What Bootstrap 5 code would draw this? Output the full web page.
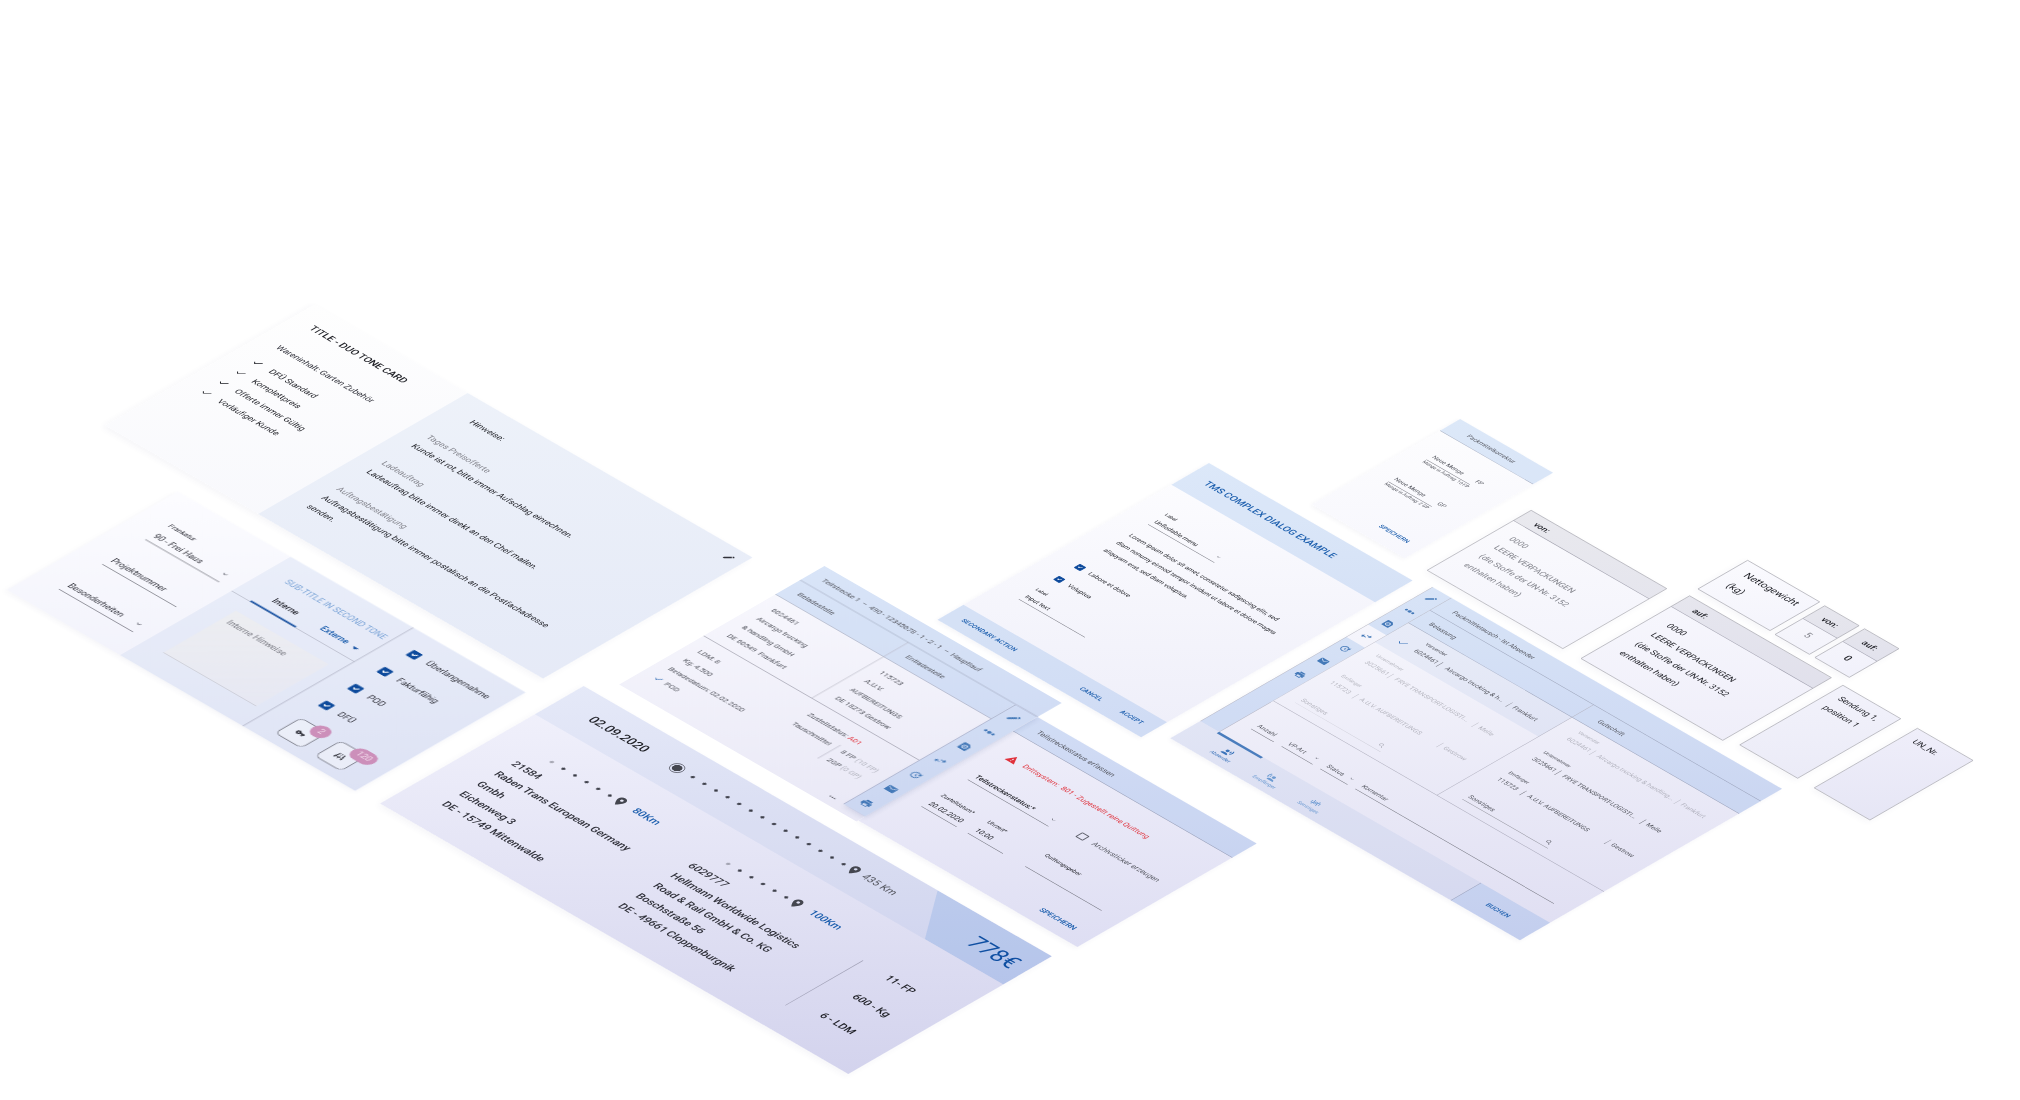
<!DOCTYPE html>
<html lang="de">
<head>
<meta charset="utf-8">
<meta name="viewport" content="width=device-width, initial-scale=1">
<title>TMS Komponenten</title>
<link href="https://cdn.jsdelivr.net/npm/bootstrap@5.3.0/dist/css/bootstrap.min.css" rel="stylesheet">
<style>
/* ---------- isometric board ---------- */
body{font-family:Roboto,"Open Sans","Liberation Sans",sans-serif;background:#fff;color:#30313a}
.board{position:relative;min-height:100vh;overflow:hidden}
.plane{position:absolute;left:0;top:0;transform-origin:0 0;transform:matrix(.86603,.5,-.86603,.5,0,0)}
.tile{position:absolute;left:calc(var(--u)*1px);top:calc(var(--v)*1px);width:calc(var(--w)*1px);height:calc(var(--h)*1px);
  transform-origin:0 0;transform:scale(var(--k));background:linear-gradient(135deg,var(--a),var(--b));
  font-size:14px;line-height:28px;white-space:nowrap;box-shadow:0 5px 10px rgba(60,60,110,.05)}
.duo{--u:486;--v:123;--w:820;--h:392;--k:.617;--a:#fefefe;--b:#f3f4fb}
.settings{--u:594;--v:389;--w:631;--h:309;--k:.637;--a:#fcfcff;--b:#eaebf8}
.route{--u:1023;--v:349;--w:807;--h:351;--k:.67;--a:#f2f2fc;--b:#d3d3ed}
.leg{--u:1042;--v:90;--w:512;--h:443;--k:.535;--a:#f9f9fe;--b:#e9e8f6}
.legstatus{--u:1316;--v:118;--w:473;--h:387;--k:.535;--a:#f0effa;--b:#dedef3}
.dialog{--u:1161;--v:-235;--w:510;--h:680;--k:.461;--a:#fdfdff;--b:#eeeef9}
.fix{--u:1262;--v:-424;--w:244;--h:389;--k:.44;--a:#fdfdfe;--b:#f7f7fd}
.swap{--u:1414;--v:-240;--w:859;--h:644;--k:.47;--a:#f8f8fd;--b:#dfdef2}
.un-from{--u:1394;--v:-374;--w:262;--h:201;--k:.6;--a:#fafafd;--b:#f4f4fc}
.un-to{--u:1571;--v:-380;--w:262;--h:201;--k:.627;--a:#f7f7fd;--b:#efeef9}
.net{--u:1569;--v:-449;--w:133;--h:92;--k:.63;--a:#fafafe;--b:#f4f4fc}
.net-from{--u:1659;--v:-448;--w:64;--h:92;--k:.63;--a:#f7f7fc;--b:#f3f3fb}
.net-to{--u:1705;--v:-448;--w:64;--h:92;--k:.63;--a:#f6f6fc;--b:#f1f1fb}
.pos{--u:1749;--v:-379;--w:107;--h:190;--k:.63;--a:#f2f2fb;--b:#ebebf7}
.unno{--u:1835;--v:-379;--w:103;--h:190;--k:.63;--a:#efeefa;--b:#e6e6f5}
.leg{z-index:2;box-shadow:none}
/* ---------- tones ---------- */
.tone{background:rgba(80,125,205,.08)}
.tone-blue,.act.tone-blue{background:rgba(60,130,220,.17)}
.tone-grey{background:rgba(20,20,40,.07)}
.soft{color:#54565f}.ghost{opacity:.38}.ink{color:#1d1e24}.muted-ink{color:#85868e}
.blue{color:#1d5fae}.blue-light{color:#7ea6d8}.red{color:#e0323c}
.med{font-weight:500}
.f11{font-size:11px;line-height:16px}.f14{font-size:14px}.f16{font-size:16px}.f19{font-size:19px}.f21{font-size:21px}.f34{font-size:34px}
.lh30{line-height:30px}.lh32{line-height:32px}
.rule-b{border-bottom:1px solid rgba(70,70,90,.45)}
.rule-t{border-top:1px solid rgba(70,70,90,.45)}
.rule-l{border-left:1px solid rgba(70,70,90,.4)}
.ico{width:16px;height:16px;fill:currentColor;flex:none}
.ico-lg{width:22px;height:22px}
.act{border:0;background:none;padding:0;color:#1d5fae;font-weight:500;line-height:28px}
/* ---------- form parts ---------- */
.fld{display:flex;flex-direction:column}
.fld label{font-size:11px;line-height:16px}
.fld input,.fld select{appearance:none;border:0;border-bottom:1px solid #5f606a;border-radius:0;background:none;padding:2px 0 0 2px;
  height:36px;width:100%;font-size:14px;color:inherit;outline:0}
.fld input::placeholder{color:inherit;opacity:1}
.fld select{background:url("data:image/svg+xml,%3Csvg xmlns='http://www.w3.org/2000/svg' viewBox='0 0 24 24'%3E%3Cpath fill='%23666873' d='M16.59 8.59L12 13.17 7.41 8.59 6 10l6 6 6-6z'/%3E%3C/svg%3E") no-repeat right 0 center/14px}
.w56{width:56px}.w67{width:67px}.w76{width:76px}.w114{width:114px}.w166{width:166px}.w174{width:174px}
.tick{display:flex;align-items:center;gap:16px}
.tick .form-check-input{width:16px;height:16px;margin:0;border-radius:2px;border:2px solid #5b5d68;background-color:transparent;flex:none}
.tick .form-check-input:checked{background-color:#0d4a9c;border-color:#0d4a9c;background-size:14px}
/* duo card */
.duo-left{width:287px;padding:28px 0 0 34px}
.duo-lead{margin:36px 0 16px}
.duo-right{flex:1;padding:28px 0 0 33px;position:relative}
.duo-notes{margin:37px 0 0}
.duo-edit{position:absolute;right:14px;top:14px;color:#30313a}
/* settings card */
.set-a{width:205px;padding:53px 0 0 46px}
.set-a .fld{width:134px}
.set-stack{display:flex;flex-direction:column;gap:42px}
.set-b{width:222px;padding-top:28px}
.set-b h2{margin:0;padding-left:34px;line-height:28px;font-weight:400}
.tabs{margin-top:15px;padding-left:33px;height:36px}
.tabs a{text-decoration:none;line-height:24px;height:36px}
.tabs a:first-child{padding:0 19px;border-bottom:3px solid #1651a3;color:#33343d}
.tabs a:last-child{padding-left:24px}
.tri{border:5px solid transparent;border-top-color:#1651a3;border-bottom:0;margin-left:10px}
.memo{display:block;margin:27px 0 0 35px;width:168px;height:132px;padding:9px 10px;border:0;border-bottom:1px solid rgba(70,70,90,.3);
  background:linear-gradient(135deg,rgba(238,238,238,.75),rgba(236,232,238,.4));resize:none;font-size:14px;line-height:28px;outline:0}
.memo::placeholder{color:#7b7c84}
.set-c{flex:1;padding:15px 0 0 35px}
.set-c .tick{height:53px}
.sq{position:relative;width:48px;height:48px;border:1px solid #4b4d58;border-radius:9px;background:rgba(255,255,255,.35);padding:0;color:#30313a}
.bubble{position:absolute;left:25px;top:-10px;min-width:28px;height:27px;line-height:27px;border-radius:14px;background:#cc8fba;color:#f3dcec;padding:0 8px;font-size:14px}
/* route card */
.route-head{height:84px;padding-left:54px;position:relative}
.route-date{width:139px}
.origin{width:20px;height:20px;border:1px solid #4b4d58;border-radius:50%;background:radial-gradient(circle,#44464f 6px,transparent 7px);margin-right:7px}
.dots{height:20px;width:120px;background:radial-gradient(circle,#3a3c46 2px,transparent 3px) 0 0/20px 20px}
.dots-long{width:280px}
.dots-fade{-webkit-mask-image:linear-gradient(90deg,rgba(0,0,0,.4) 20px,#000 20px)}
.pin{width:22px;height:22px;margin:0 -3px;fill:#44464f;flex:none}
.price{position:absolute;right:0;top:0;width:197px;height:84px;background:rgba(60,130,220,.17);clip-path:polygon(0 0,100% 0,100% 100%,62px 100%);
  padding-left:103px;line-height:88px;color:#0f4fa2}
.stop{width:304px;padding-top:46px}
.stop .track{padding-left:76px}
.stop address{margin:8px 0 0 54px}
.stop:nth-child(2){width:346px}
.loadline{height:134px;margin-top:85px}
.loads{margin:61px 0 0 44px;line-height:56px}
/* leg card */
.bar52{height:53px;line-height:54px;padding-left:24px}
.rail{width:47px;color:#4479b8}
.rail span{height:53px;display:flex;align-items:center;justify-content:center}
.rail-shadow{box-shadow:6px 4px 10px rgba(40,60,120,.12)}
.rail .rest{height:252px;align-items:flex-start;padding-top:20px}
.stopcell{height:154px;padding:15px 0 0 25px}
.status-left{width:234px;padding:17px 0 0 24px;line-height:32px}
.status-right{padding:17px 0 0 25px;line-height:32px;position:relative;flex:1}
.pallets{position:absolute;left:118px;top:56px;padding:0 0 0 12px;line-height:31px;height:50px;display:flex;flex-direction:column;justify-content:center}
.dots3{position:absolute;left:200px;top:147px}
.paren{color:#b3b4bf}
/* leg status */
.ls-body{padding:42px 36px 0 42px}
.ls-row{display:flex;align-items:flex-end}
.receiver{width:165px}
/* dialog */
.dlg-head{height:94px;line-height:92px;padding-left:38px}
.dlg-body{height:521px;padding:64px 0 0 57px}
.dlg-foot{height:65px;padding:0 29px 0 31px}
/* swap card */
.swap .rail{width:46px}
.swap-main{width:813px}
.swap-col{width:401px}
.party{height:86px;padding:18px 0 0 30px}
.party-first{height:82px;padding-top:15px}
.party-val{margin-top:10px}
.party-val>*{height:18px;line-height:16px}
.party-val>*+*{border-left:1px solid #5f606a}
.party-val>:first-child{width:60px}
.party-val>:nth-child(2){width:208px;padding-left:12px}
.party-val>:nth-child(3){padding-left:10px}
.col-b .party{padding-left:39px}
.col-b .party-val>:first-child{width:61px}
.party.sel{padding-left:66px;position:relative}
.party.sel .party-val>:nth-child(2){width:171px;padding-left:15px}
.sel-tick{position:absolute;left:24px;top:38px;color:#3b74ba}
.other{margin:22px 0 22px 30px;width:210px;position:relative}
.col-b .other{margin-left:39px}
.other .fld input{height:33px;border-color:#85868f}
.other svg{position:absolute;right:4px;top:10px}
.entry{height:129px;padding:51px 36px 0 32px;display:flex;gap:19px}
.swap-foot{height:74px}
.foot-tabs{padding-left:46px}
.foot-tab{width:108px;color:#6d9bd2;text-decoration:none;padding-top:22px}
.foot-tab.on{color:#3b74ba;padding-top:16px;border-top:6px solid #4a7dbd}
.flip{transform:scaleX(-1)}
.act.buchen{width:170px;padding-right:12px;border-left:1px solid rgba(70,70,90,.4)}
/* packaging tiles */
.lined{border:1px solid #a3a4ad}
.hd35{height:34px;line-height:36px;padding-left:26px}
.hd41{height:40px;line-height:42px}
.un-text{padding:17px 0 0 26px;line-height:29px}
.net-title{font-size:16px;padding:8px 0 0 20px}
</style>
</head>
<body>
<svg width="0" height="0" class="d-none" aria-hidden="true">
  <symbol id="i-edit" viewBox="0 0 24 24"><path d="M3 17.25V21h3.75L17.81 9.94l-3.75-3.75L3 17.25zM20.71 7.04a1 1 0 000-1.41l-2.34-2.34a1 1 0 00-1.41 0l-1.83 1.83 3.75 3.75 1.83-1.83z"/></symbol>
  <symbol id="i-check" viewBox="0 0 24 24"><path d="M9 16.17L4.83 12l-1.42 1.41L9 19 21 7l-1.41-1.41z"/></symbol>
  <symbol id="i-nodes" viewBox="0 0 24 24"><circle cx="3.500" cy="12" r="3"/><circle cx="12" cy="12" r="4"/><circle cx="20.500" cy="12" r="3"/></symbol>
  <symbol id="i-cam" viewBox="0 0 24 24"><path fill-rule="evenodd" d="M5 2h10l6 6v12a2 2 0 01-2 2H5a2 2 0 01-2-2V4a2 2 0 012-2zm7 5a5.500 5.500 0 100 11 5.500 5.500 0 000-11zm0 2a3.500 3.500 0 110 7 3.500 3.500 0 010-7zm0 2a1.500 1.500 0 100 3 1.500 1.500 0 000-3z"/></symbol>
  <symbol id="i-swap" viewBox="0 0 24 24"><path d="M6.990 10L2 15l4.990 5v-4H13v-2H6.990v-4zM22 9l-4.990-5v4H11v2h6.010v4L22 9z"/></symbol>
  <symbol id="i-clock" viewBox="0 0 24 24"><path d="M21 10.120h-6.780l2.740-2.820c-2.730-2.700-7.150-2.800-9.880-.1-2.730 2.710-2.730 7.080 0 9.790s7.150 2.710 9.880 0C18.320 15.650 19 14.080 19 12.100h2c0 1.980-.88 4.550-2.640 6.290-3.510 3.480-9.210 3.480-12.720 0-3.500-3.470-3.530-9.110-.02-12.580s9.140-3.470 12.650 0L21 3v7.120zM12.500 8v4.250l3.500 2.080-.72 1.210L11 13V8h1.500z"/></symbol>
  <symbol id="i-mail" viewBox="0 0 24 24"><path d="M20 4H4c-1.100 0-2 .9-2 2v12c0 1.100.9 2 2 2h16c1.100 0 2-.9 2-2V6c0-1.100-.9-2-2-2zm0 4l-8 5-8-5V6l8 5 8-5v2z"/></symbol>
  <symbol id="i-print" viewBox="0 0 24 24"><path d="M19 8H5c-1.660 0-3 1.340-3 3v6h4v4h12v-4h4v-6c0-1.660-1.340-3-3-3zm-3 11H8v-5h8v5zm3-7c-.55 0-1-.45-1-1s.45-1 1-1 1 .45 1 1-.45 1-1 1zm-1-9H6v4h12V3z"/></symbol>
  <symbol id="i-pin" viewBox="0 0 24 24"><path fill-rule="evenodd" d="M12 2C8.130 2 5 5.130 5 9c0 5.250 7 13 7 13s7-7.750 7-13c0-3.870-3.130-7-7-7zm0 9.500a2.500 2.500 0 010-5 2.500 2.500 0 010 5z"/></symbol>
  <symbol id="i-warn" viewBox="0 0 24 24"><path d="M1 21h22L12 2 1 21zm12-3h-2v-2h2v2zm0-4h-2v-4h2v4z"/></symbol>
  <symbol id="i-key" viewBox="0 0 24 24"><path d="M12.650 10C11.830 7.670 9.610 6 7 6c-3.310 0-6 2.690-6 6s2.690 6 6 6c2.610 0 4.830-1.670 5.650-4H17v4h4v-4h2v-4H12.650zM7 14c-1.100 0-2-.9-2-2s.9-2 2-2 2 .9 2 2-.9 2-2 2z"/></symbol>
  <symbol id="i-map" viewBox="0 0 24 24"><path d="M1 21L5 4h2.500L5 21zM23 21L19 4h-2.500L19 21zM11 4h2v4h-2zM11 10h2v4h-2zM11 16h2v5h-2zM4 15h16v2H4z"/></symbol>
  <symbol id="i-search" viewBox="0 0 24 24"><path d="M15.500 14h-.79l-.28-.27A6.471 6.471 0 0016 9.500 6.500 6.500 0 109.500 16c1.610 0 3.090-.59 4.230-1.570l.27.28v.79l5 4.990L20.490 19l-4.990-5zm-6 0a4.500 4.500 0 110-9 4.500 4.500 0 010 9z"/></symbol>
  <symbol id="i-voice" viewBox="0 0 24 24"><circle cx="9" cy="9" r="4"/><path d="M9 15c-2.670 0-8 1.340-8 4v2h16v-2c0-2.660-5.330-4-8-4zM16.760 5.360l-1.680 1.690c.84 1.180.84 2.710 0 3.890l1.680 1.690c2.020-2.020 2.020-5.070 0-7.270zM20.070 2l-1.630 1.630c2.770 3.020 2.770 7.560 0 10.740L20.070 16c3.900-3.890 3.910-9.950 0-14z"/></symbol>
  <symbol id="i-waves" viewBox="0 0 24 24"><path fill="none" stroke="currentColor" stroke-width="2" d="M9.500 8q3 4 0 8M5.500 5q5 7 0 14M14.500 8q-3 4 0 8M18.500 5q-5 7 0 14M2 9q2 3 0 6M22 9q-2 3 0 6"/></symbol>
</svg>

<main class="board">
<div class="plane">

  <section class="tile duo d-flex">
    <div class="duo-left">
      <h1 class="f16 med ink m-0 lh-base">TITLE - DUO TONE CARD</h1>
      <p class="duo-lead">Wareninhalt: Garten Zubehör</p>
      <ul class="list-unstyled m-0 lh32 ink">
        <li class="d-flex align-items-center gap-3"><svg class="ico"><use href="#i-check"/></svg>DFÜ Standard</li>
        <li class="d-flex align-items-center gap-3"><svg class="ico"><use href="#i-check"/></svg>Komplettpreis</li>
        <li class="d-flex align-items-center gap-3"><svg class="ico"><use href="#i-check"/></svg>Offerte immer Gültig</li>
        <li class="d-flex align-items-center gap-3"><svg class="ico"><use href="#i-check"/></svg>Vorläufiger Kunde</li>
      </ul>
    </div>
    <div class="duo-right tone">
      <p class="ms-3 mb-0 ink">Hinweise:</p>
      <p class="duo-notes ink"><span class="muted-ink">Tages Preisofferte</span><br>Kunde ist rot, bitte immer Aufschlag einrechnen.<br><br>
        <span class="muted-ink">Ladeauftrag</span><br>Ladeauftrag bitte immer direkt an den Chef mailen.<br><br>
        <span class="muted-ink">Auftragsbestätigung</span><br>Auftragsbestätigung bitte immer postalisch an die Postfachadresse<br>senden.</p>
      <svg class="ico duo-edit"><use href="#i-edit"/></svg>
    </div>
  </section>

  <section class="tile settings d-flex">
    <div class="set-a"><div class="set-stack">
      <div class="fld"><label for="frk">Frankatur</label><select id="frk"><option>90 - Frei Haus</option></select></div>
      <div class="fld"><input aria-label="Projektnummer" placeholder="Projektnummer"></div>
      <div class="fld"><select aria-label="Besonderheiten"><option>Besonderheiten</option></select></div>
    </div></div>
    <div class="set-b tone">
      <h2 class="blue-light f14">SUB-TITLE IN SECOND TONE</h2>
      <nav class="tabs d-flex rule-b"><a href="#" class="med">Interne</a><a href="#" class="med blue d-flex align-items-start">Externe<span class="tri align-self-center mb-2"></span></a></nav>
      <textarea class="memo" placeholder="Interne Hinweise" aria-label="Interne Hinweise"></textarea>
    </div>
    <div class="set-c tone rule-l">
      <label class="tick"><input class="form-check-input" type="checkbox" checked>Überlangernahme</label>
      <label class="tick"><input class="form-check-input" type="checkbox" checked>Fakturfähig</label>
      <label class="tick"><input class="form-check-input" type="checkbox" checked>POD</label>
      <label class="tick"><input class="form-check-input" type="checkbox" checked>DFÜ</label>
      <div class="d-flex gap-4 mt-3 ms-1">
        <button class="sq" type="button" aria-label="Schlüssel"><svg class="ico"><use href="#i-key"/></svg><span class="bubble">2</span></button>
        <button class="sq" type="button" aria-label="Strecke"><svg class="ico"><use href="#i-map"/></svg><span class="bubble">120</span></button>
      </div>
    </div>
  </section>

  <section class="tile route">
    <div class="route-head tone d-flex align-items-center">
      <div class="route-date f19 med ink">02.09.2020</div>
      <span class="origin"></span><span class="dots dots-long"></span>
      <svg class="pin"><use href="#i-pin"/></svg><span class="f16 soft ms-2">435 Km</span>
      <div class="price f34">778€</div>
    </div>
    <div class="d-flex">
      <div class="stop">
        <div class="track d-flex align-items-center lh-1"><span class="dots dots-fade"></span><svg class="pin"><use href="#i-pin"/></svg><span class="f16 blue med ms-3">80Km</span></div>
        <address class="f16 lh30 med">21584<br>Raben Trans European Germany<br>Gmbh<br>Eichenweg 3<br>DE - 15749 Mittenwalde</address>
      </div>
      <div class="stop">
        <div class="track d-flex align-items-center lh-1"><span class="dots dots-fade"></span><svg class="pin"><use href="#i-pin"/></svg><span class="f16 blue med ms-3">100Km</span></div>
        <address class="f16 lh30 med">6029777<br>Hellmann Worldwide Logistics<br>Road &amp; Rail GmbH &amp; Co. KG<br>Boschstraße 56<br>DE - 49661 Cloppenburgnik</address>
      </div>
      <div class="loadline rule-l"></div>
      <div class="loads f16 med ink">11- FP<br>600 - Kg<br>6 - LDM</div>
    </div>
  </section>

  <section class="tile legstatus">
    <div class="tone-blue rule-b bar52 ps-4 soft"><span class="ms-1">Teilstreckestatus erfassen</span></div>
    <div class="ls-body">
      <div class="d-flex align-items-center red gap-2 lh-sm"><svg class="ico ico-lg"><use href="#i-warn"/></svg><span class="ms-1">Drittsystem: &nbsp;801 - Zugestellt reine Quittung</span></div>
      <div class="ls-row ink mt-4 pt-3">
        <div class="fld w174"><select aria-label="Teilstreckenstatus" class="med"><option>Teilstreckenstatus:*</option></select></div>
        <label class="tick soft ms-5 mb-1 gap-3"><input class="form-check-input" type="checkbox">Archivsticker erzeugen</label>
      </div>
      <div class="ls-row ink mt-5 gap-4">
        <div class="fld w76"><label for="zd">Zustelldatum*</label><input id="zd" value="20.02.2020"></div>
        <div class="fld w76"><label for="uz">Uhrzeit*</label><input id="uz" value="10:00"></div>
        <div class="fld ms-4 receiver"><label for="qg">Quittungsgeber</label><input id="qg" class="pt-0"></div>
      </div>
      <div class="d-flex justify-content-end mt-5"><button type="button" class="act">SPEICHERN</button></div>
    </div>
  </section>

  <section class="tile leg soft">
    <div class="bar52 tone-blue rule-b">Teilstrecke 1 &nbsp;– &nbsp;490 - 12345678 - 1 - 2 - 1 &nbsp;– &nbsp;Hauptlauf</div>
    <div class="d-flex">
      <div class="flex-grow-1">
        <div class="d-flex">
          <div class="w-50"><div class="bar52 tone-blue rule-b">Beladestelle</div>
            <div class="stopcell lh32">6024461<br>Aircargo trucking<br>&amp; handling GmbH<br>DE 60549&nbsp; Frankfurt</div></div>
          <div class="w-50 rule-l"><div class="bar52 tone-blue rule-b">Entladestelle</div>
            <div class="stopcell lh32">115723<br>A.U.V.<br>AUFBEREITUNGS<br>DE 18273 Gestrow</div></div>
        </div>
        <div class="d-flex rule-t">
          <div class="status-left">LDM: 8<br>Kg: 4.500<br>Beladedatum: 02.02.2020<br><span class="d-flex align-items-center gap-2"><svg class="ico blue"><use href="#i-check"/></svg>POD</span></div>
          <div class="status-right">Zustellstatus: <span class="red">A01</span><br>Tauschmittel
            <div class="pallets rule-l"><span>8 FP <span class="paren">(10 FP)</span></span><span>2GP <span class="paren">(0 GP)</span></span></div>
            <span class="dots3">•••</span></div>
        </div>
      </div>
      <div class="rail rail-shadow tone-blue rule-l">
        <span><svg class="ico ico-lg"><use href="#i-edit"/></svg></span>
        <span><svg class="ico ico-lg"><use href="#i-nodes"/></svg></span>
        <span><svg class="ico ico-lg"><use href="#i-cam"/></svg></span>
        <span><svg class="ico ico-lg"><use href="#i-swap"/></svg></span>
        <span><svg class="ico ico-lg"><use href="#i-clock"/></svg></span>
        <span><svg class="ico ico-lg"><use href="#i-mail"/></svg></span>
        <span><svg class="ico ico-lg"><use href="#i-print"/></svg></span>
      </div>
    </div>
  </section>

  <section class="tile dialog ink">
    <div class="dlg-head tone-blue f21 med blue">TMS COMPLEX DIALOG EXAMPLE</div>
    <div class="dlg-body">
      <div class="fld w166"><label for="um">Label</label><select id="um"><option>Unflodable menu</option></select></div>
      <p class="mt-4 mb-0 pt-1 lh32">Lorem ipsum dolor sit amet, consetetur sadipscing elitr, sed<br>diam nonumy eirmod tempor invidunt ut labore et dolore magna<br>aliquyam erat, sed diam voluptua.</p>
      <label class="tick mt-4 pt-3 mb-4"><input class="form-check-input" type="checkbox" checked>Labore et dolore</label>
      <label class="tick"><input class="form-check-input" type="checkbox" checked>Voluptua</label>
      <div class="fld mt-4 w166"><label for="it" class="mt-1">Label</label><input id="it" value="Input text"></div>
    </div>
    <div class="dlg-foot tone-blue d-flex align-items-center">
      <button type="button" class="act me-auto">SECONDARY ACTION</button>
      <button type="button" class="act me-5">CANCEL</button><button type="button" class="act">ACCEPT</button>
    </div>
  </section>

  <section class="tile fix soft">
    <div class="bar52 tone-blue rule-b ps-5">Packmittelkorrektur</div>
    <div class="ps-5 pt-5">
      <div class="d-flex"><div class="fld w114"><input aria-label="Neue Menge FP" placeholder="Neue Menge"><span class="f11">Menge in Auftrag: 10 FP</span></div><span class="mt-1">FP</span></div>
      <div class="d-flex mt-5"><div class="fld w114"><input aria-label="Neue Menge GP" placeholder="Neue Menge"><span class="f11">Menge in Auftrag: 2 GP</span></div><span class="mt-1">GP</span></div>
    </div>
    <div class="d-flex justify-content-end pe-4 pt-5 mt-4"><button type="button" class="act mt-2 me-2">SPEICHERN</button></div>
  </section>

  <section class="tile swap soft">
    <div class="d-flex">
      <div class="rail rule-l">
        <span class="tone-blue"><svg class="ico ico-lg"><use href="#i-edit"/></svg></span>
        <span class="tone-blue"><svg class="ico ico-lg"><use href="#i-nodes"/></svg></span>
        <span class="tone-blue"><svg class="ico ico-lg"><use href="#i-cam"/></svg></span>
        <span><svg class="ico ico-lg"><use href="#i-swap"/></svg></span>
        <span class="tone-blue"><svg class="ico ico-lg"><use href="#i-clock"/></svg></span>
        <span class="tone-blue"><svg class="ico ico-lg"><use href="#i-mail"/></svg></span>
        <span class="tone-blue rest"><svg class="ico ico-lg"><use href="#i-print"/></svg></span>
      </div>
      <div class="swap-main rule-l">
        <div class="bar52 tone-blue rule-b ps-4"><span class="ms-2">Packmittletausch - Ist Absender</span></div>
        <div class="d-flex">
          <div class="swap-col">
            <div class="bar52 tone-blue rule-b"><span class="ms-1">Belastung</span></div>
            <div class="party party-first sel tone"><svg class="ico ico-lg sel-tick"><use href="#i-check"/></svg><div class="f11">Versender</div><div class="party-val d-flex"><span>6024461</span><span>Aircargo trucking &amp; h...</span><span>Frankfurt</span></div></div>
            <div class="party ghost"><div class="f11">Unternehmer</div><div class="party-val d-flex"><span>3025661</span><span>FRYE TRANSPORT-LOGISTI...</span><span>Melle</span></div></div>
            <div class="party ghost"><div class="f11">Emfänger</div><div class="party-val d-flex"><span>115723</span><span>A.U.V. AUFBEREITUNGS</span><span>Gestrow</span></div></div>
            <div class="other ghost"><div class="fld"><input aria-label="Sonstiges Belastung" placeholder="Sonstiges"></div><svg class="ico"><use href="#i-search"/></svg></div>
          </div>
          <div class="flex-grow-1 col-b rule-l">
            <div class="bar52 tone-blue rule-b"><span class="ms-3">Gutschrift</span></div>
            <div class="party party-first ghost"><div class="f11">Versender</div><div class="party-val d-flex"><span>6024461</span><span>Aircargo trucking &amp; handling...</span><span>Frankfurt</span></div></div>
            <div class="party"><div class="f11">Unternehmer</div><div class="party-val d-flex"><span>3025661</span><span>FRYE TRANSPORT-LOGISTI...</span><span>Melle</span></div></div>
            <div class="party"><div class="f11">Emfänger</div><div class="party-val d-flex"><span>115723</span><span>A.U.V. AUFBEREITUNGS</span><span>Gestrow</span></div></div>
            <div class="other"><div class="fld"><input aria-label="Sonstiges Gutschrift" placeholder="Sonstiges"></div><svg class="ico"><use href="#i-search"/></svg></div>
          </div>
        </div>
        <div class="entry rule-t">
          <div class="fld w56"><input aria-label="Anzahl" placeholder="Anzahl"></div>
          <div class="fld w76"><select aria-label="VP-Art"><option>VP-Art</option></select></div>
          <div class="fld w67"><select aria-label="Status"><option>Status</option></select></div>
          <div class="fld flex-grow-1"><input aria-label="Komentar" placeholder="Komentar"></div>
        </div>
      </div>
    </div>
    <div class="d-flex swap-foot">
      <div class="flex-grow-1 d-flex tone foot-tabs">
        <a href="#" class="foot-tab on text-center d-flex flex-column align-items-center f11"><svg class="ico ico-lg"><use href="#i-voice"/></svg>Absender</a>
        <a href="#" class="foot-tab text-center d-flex flex-column align-items-center f11"><svg class="ico ico-lg flip"><use href="#i-voice"/></svg>Empfänger</a>
        <a href="#" class="foot-tab text-center d-flex flex-column align-items-center f11"><svg class="ico ico-lg"><use href="#i-waves"/></svg>Sonstiges</a>
      </div>
      <button type="button" class="act buchen tone-blue">BUCHEN</button>
    </div>
  </section>

  <section class="tile lined un-from">
    <div class="hd35 tone-grey rule-b med ink">von:</div>
    <div class="un-text muted-ink">0000<br>LEERE VERPACKUNGEN<br>(die Stoffe der UN-Nr. 3152<br>enthalten haben)</div>
  </section>
  <section class="tile lined un-to ink">
    <div class="hd35 tone-grey rule-b med">auf:</div>
    <div class="un-text">0000<br>LEERE VERPACKUNGEN<br>(die Stoffe der UN-Nr. 3152<br>enthalten haben)</div>
  </section>
  <section class="tile lined net net-title ink lh32">Nettogewicht<br>(kg)</section>
  <section class="tile lined net-from text-center"><div class="hd41 tone-grey rule-b ink med">von:</div><div class="pt-2 muted-ink f16">5</div></section>
  <section class="tile lined net-to text-center ink"><div class="hd41 tone-grey rule-b med">auf:</div><div class="pt-2 f16 med">0</div></section>
  <section class="tile lined pos ink ps-3 pt-2">Sendung 1,<br>position 1</section>
  <section class="tile lined unno ink ps-3 pt-2">UN_Nr.</section>
</div>
</main>
<script src="https://cdn.jsdelivr.net/npm/bootstrap@5.3.0/dist/js/bootstrap.bundle.min.js"></script>
</body>
</html>
